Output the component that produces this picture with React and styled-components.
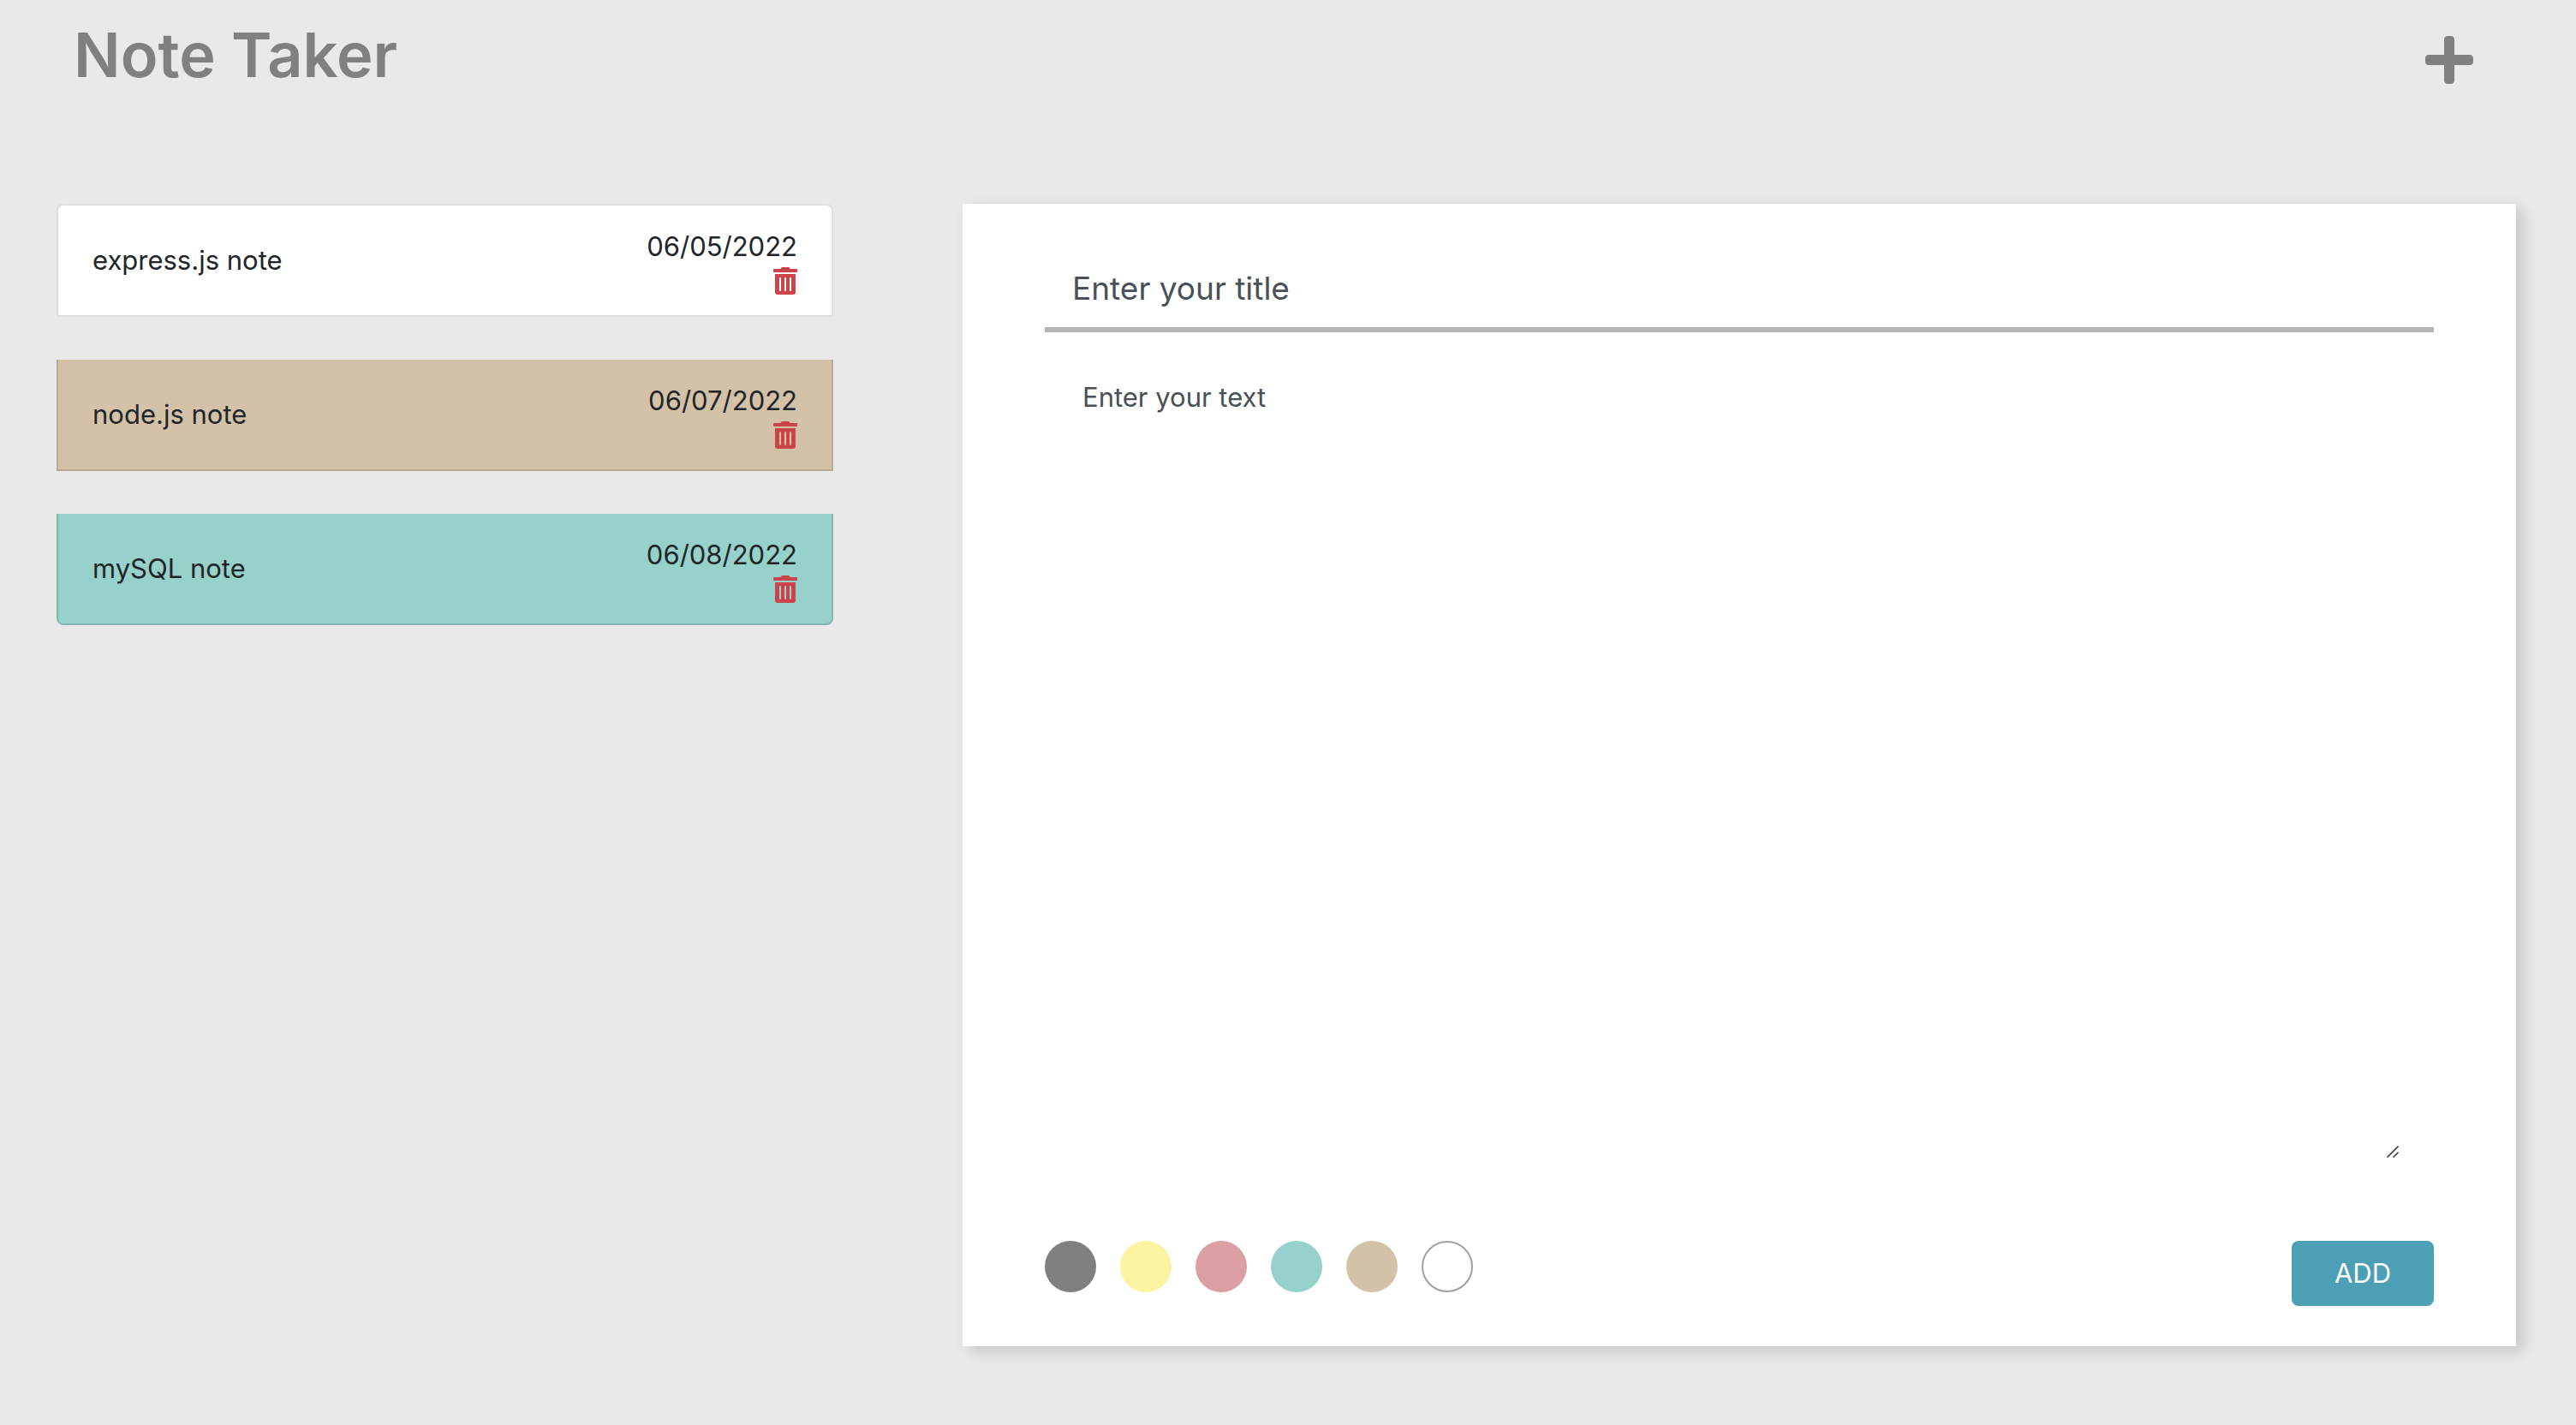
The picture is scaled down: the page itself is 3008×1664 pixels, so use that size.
import React, { useState } from "react";
import styled, { createGlobalStyle } from "styled-components";
import { FaPlus, FaTrashAlt } from "react-icons/fa";

const GlobalStyle = createGlobalStyle`
  *, *::before, *::after { box-sizing: border-box; }
  body {
    margin: 0;
    background: #e9e9e9;
    color: #212529;
    font-family: Inter, "Liberation Sans", sans-serif;
    font-size: 31px;
    line-height: 48px;
  }
  button, input, textarea { font: inherit; color: inherit; }
`;

const Page = styled.div`
  min-height: 100vh;
  display: flex;
  flex-direction: column;
  padding-bottom: 92px;
`;

const Header = styled.header`
  display: flex;
  justify-content: space-between;
  align-items: flex-start;
  height: 238px;
  padding: 16px 120px 0 86px;
`;

const Title = styled.h1`
  margin: 0;
  color: #808080;
  font-size: 72px;
  font-weight: 600;
  line-height: 96px;
`;

const IconButton = styled.button`
  display: block;
  padding: 0;
  border: 0;
  background: none;
  cursor: pointer;
  color: ${(p) => p.$color};
  font-size: ${(p) => p.$size};
  line-height: 1;
  margin-top: ${(p) => p.$top || "0"};

  svg { display: block; width: 0.875em; }
`;

const Main = styled.main`
  flex: 1;
  display: grid;
  grid-template-columns: minmax(0, 1fr) minmax(0, 2fr);
  gap: 151px;
  padding: 0 70px 0 66px;
`;

const NoteList = styled.ul`
  display: flex;
  flex-direction: column;
  gap: 50px;
  margin: 0;
  padding: 0;
  list-style: none;
`;

const NoteItem = styled.li`
  display: flex;
  justify-content: space-between;
  align-items: center;
  padding: 24px 40px;
  border: 2px solid rgba(0, 0, 0, 0.125);
  background: ${(p) => p.$color};
  background-clip: border-box;

  &:first-child { border-radius: 8px 8px 0 0; }
  &:last-child { border-radius: 0 0 8px 8px; }
  & + & { border-top-width: 0; }
`;

const NoteMeta = styled.div`
  display: flex;
  flex-direction: column;
  align-items: flex-end;
`;

const Editor = styled.form`
  display: flex;
  flex-direction: column;
  padding: 52px 96px 47px;
  background: #fff;
  box-shadow: 8px 6px 16px rgba(0, 0, 0, 0.15);
`;

const TitleInput = styled.input`
  width: 100%;
  height: 98px;
  padding: 0 32px;
  border: 0;
  border-bottom: 6px solid #b5b3b4;
  background: none;
  font-size: 37px;
  outline: none;

  &::placeholder { color: #495057; opacity: 1; }
`;

const TextWrap = styled.div`
  flex: 1;
  display: flex;
  padding: 40px 40px 96px 20px;
`;

const TextInput = styled.textarea`
  flex: 1;
  padding: 12px 24px;
  border: 0;
  background: none;
  outline: none;
  resize: vertical;

  &::placeholder { color: #495057; opacity: 1; }

  &::-webkit-resizer {
    background: url("data:image/svg+xml,%3Csvg xmlns='http://www.w3.org/2000/svg' width='15' height='15'%3E%3Cpath d='M0.5 13.5L13.5 0.5M7.5 13.5L13.5 7.5' stroke='%23444' stroke-width='1.7'/%3E%3C/svg%3E") no-repeat 0 0;
  }
`;

const Footer = styled.div`
  display: flex;
  justify-content: space-between;
  align-items: flex-start;
`;

const Swatches = styled.div`
  display: flex;
  gap: 28px;
`;

const Swatch = styled.input`
  appearance: none;
  width: 60px;
  height: 60px;
  margin: 0;
  border: ${(p) => (p.$outlined ? "2px solid #a0a0a0" : "0")};
  border-radius: 50%;
  background: ${(p) => p.$color};
  cursor: pointer;
`;

const AddButton = styled.button`
  width: 166px;
  height: 76px;
  padding: 0;
  border: 0;
  border-radius: 8px;
  background: #4c9fb5;
  color: #fff;
  cursor: pointer;
`;

const initialNotes = [
  { id: 1, title: "express.js note", date: "06/05/2022", color: "#ffffff" },
  { id: 2, title: "node.js note", date: "06/07/2022", color: "#d3c2a8" },
  { id: 3, title: "mySQL note", date: "06/08/2022", color: "#97d1cb" },
];

const colors = [
  { name: "Gray", value: "#808080" },
  { name: "Yellow", value: "#fcf4a3" },
  { name: "Pink", value: "#dc9fa3" },
  { name: "Teal", value: "#97d1cb" },
  { name: "Tan", value: "#d3c2a8" },
  { name: "White", value: "#ffffff", outlined: true },
];

export default function App() {
  const [notes, setNotes] = useState(initialNotes);
  const [title, setTitle] = useState("");
  const [text, setText] = useState("");
  const [color, setColor] = useState("#ffffff");

  const clear = () => {
    setTitle("");
    setText("");
  };

  const addNote = (event) => {
    event.preventDefault();
    if (!title) return;
    const date = new Date().toLocaleDateString("en-US", {
      month: "2-digit",
      day: "2-digit",
      year: "numeric",
    });
    setNotes([...notes, { id: Date.now(), title, date, color }]);
    clear();
  };

  return (
    <>
      <GlobalStyle />
      <Page>
        <Header>
          <Title>Note Taker</Title>
          <IconButton
            type="button"
            aria-label="New note"
            onClick={clear}
            $color="#808080"
            $size="64px"
            $top="22px"
          >
            <FaPlus />
          </IconButton>
        </Header>
        <Main>
          <NoteList>
            {notes.map((note) => (
              <NoteItem key={note.id} $color={note.color}>
                <span>{note.title}</span>
                <NoteMeta>
                  <time>{note.date}</time>
                  <IconButton
                    type="button"
                    aria-label={`Delete ${note.title}`}
                    onClick={() => setNotes(notes.filter((n) => n.id !== note.id))}
                    $color="#cb444a"
                    $size="32px"
                  >
                    <FaTrashAlt />
                  </IconButton>
                </NoteMeta>
              </NoteItem>
            ))}
          </NoteList>
          <Editor onSubmit={addNote}>
            <TitleInput
              aria-label="Title"
              placeholder="Enter your title"
              value={title}
              onChange={(e) => setTitle(e.target.value)}
            />
            <TextWrap>
              <TextInput
                aria-label="Text"
                placeholder="Enter your text"
                value={text}
                onChange={(e) => setText(e.target.value)}
              />
            </TextWrap>
            <Footer>
              <Swatches role="radiogroup" aria-label="Note color">
                {colors.map((c) => (
                  <Swatch
                    key={c.name}
                    type="radio"
                    name="color"
                    aria-label={c.name}
                    checked={color === c.value}
                    onChange={() => setColor(c.value)}
                    $color={c.value}
                    $outlined={c.outlined}
                  />
                ))}
              </Swatches>
              <AddButton type="submit">ADD</AddButton>
            </Footer>
          </Editor>
        </Main>
      </Page>
    </>
  );
}
